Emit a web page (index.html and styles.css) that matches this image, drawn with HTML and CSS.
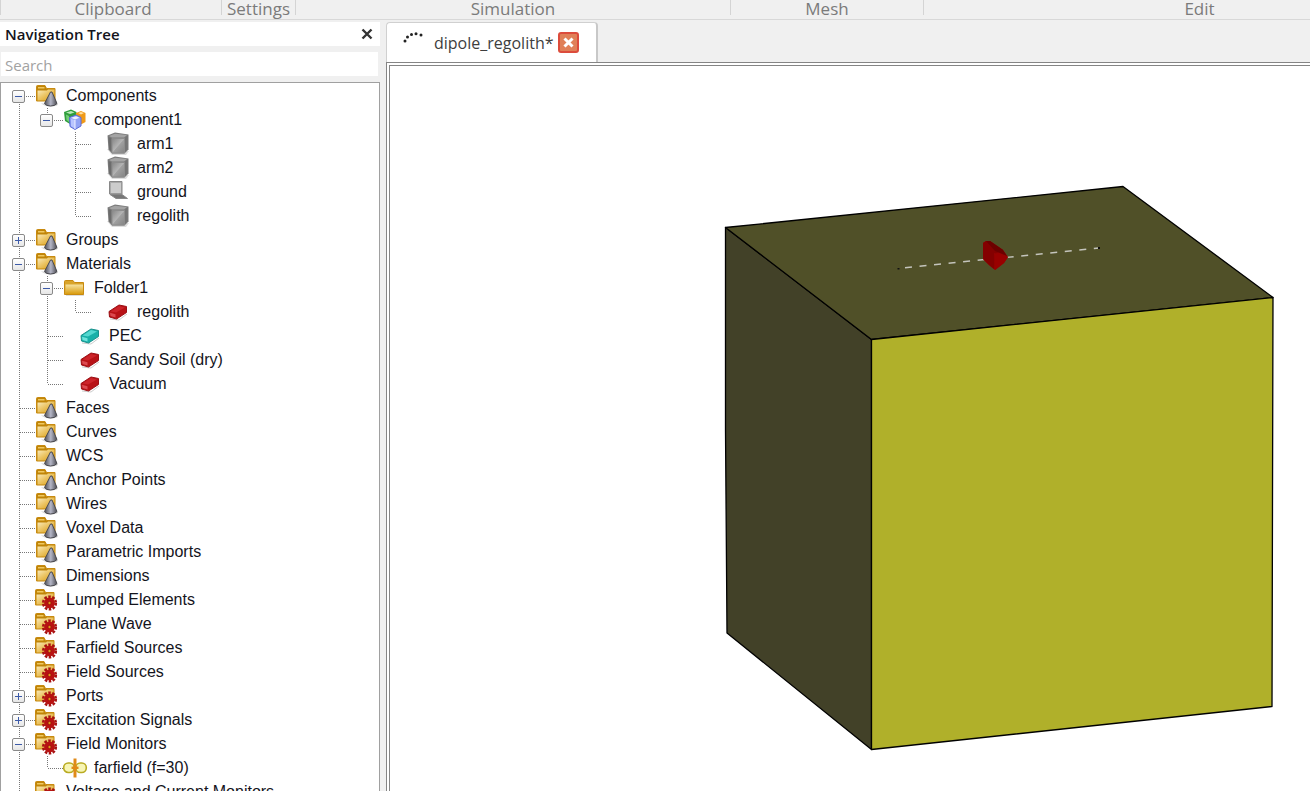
FILE: index.html
```html
<!DOCTYPE html>
<html lang="en">
<head>
<meta charset="utf-8">
<title>dipole_regolith</title>
<link rel="stylesheet" href="styles.css">
</head>
<body>
<svg class="sprite" width="0" height="0" aria-hidden="true">
  <defs>
    <linearGradient id="gold" x1="0" y1="0" x2="1" y2="1">
      <stop offset="0" stop-color="#fbedc0"/><stop offset=".45" stop-color="#ecc667"/><stop offset="1" stop-color="#d89a0c"/>
    </linearGradient>
    <linearGradient id="goldv" x1="0" y1="0" x2="0" y2="1">
      <stop offset="0" stop-color="#f6e2a0"/><stop offset="1" stop-color="#d99c0e"/>
    </linearGradient>
    <linearGradient id="steel" x1="0" y1="0" x2="1" y2="0">
      <stop offset="0" stop-color="#4e4e54"/><stop offset=".5" stop-color="#b4b6c6"/><stop offset="1" stop-color="#4a4a50"/>
    </linearGradient>
    <linearGradient id="gray" x1="0" y1="0" x2="1" y2="1">
      <stop offset="0" stop-color="#868686"/><stop offset=".48" stop-color="#b4b4b4"/><stop offset=".52" stop-color="#a0a0a0"/><stop offset="1" stop-color="#848484"/>
    </linearGradient>
    <g id="base">
      <path d="M.5 17V2.500Q.5 1.500 1.500 1.500H9l1.500 3h8.500V17z" fill="#c08508" stroke="#c88a10"/>
      <path d="M2 3h6.500v1.500H2z" fill="#f0c860"/>
      <path d="M1.500 6.500H11L12 5.500H18.500V16.500H1.500z" fill="url(#gold)"/>
    </g>
    <symbol id="cone" viewBox="0 0 24 24">
      <use href="#base"/>
      <path d="M5 19.500Q11 24 21 21.500L22 20z" fill="#999" opacity=".5"/>
      <path d="M14.500 8L8.500 19.500Q10 22 14.500 22T21 19.500L16 8z" fill="url(#steel)" stroke="#4a4a50"/>
    </symbol>
    <symbol id="gear" viewBox="0 0 24 24">
      <use href="#base" x="-1"/>
      <circle cx="13.500" cy="15" r="6.300" fill="none" stroke="#a81212" stroke-width="2.600" stroke-dasharray="2.500 1.458"/>
      <circle cx="13.500" cy="15" r="4" fill="#c40e0e" stroke="#b81212" stroke-width="2.800"/>
      <circle cx="13.500" cy="15" r="1.700" fill="#e39a18" stroke="#9a1010"/>
    </symbol>
    <symbol id="folder" viewBox="0 0 24 24">
      <path d="M2 19H20" stroke="#bbb"/>
      <path d="M.5 18.500V5.500Q.5 4.500 1.500 4.500H9l1.500 2H19.500V18.500z" fill="#d9a42a" stroke="#c88a10"/>
      <path d="M1.500 8.500H19V18H1.500z" fill="url(#goldv)"/>
    </symbol>
    <symbol id="component" viewBox="0 0 24 24">
      <path d="M0 4L7 1.500L12.500 4V13L6 16L1 13z" fill="#2f9e3c"/>
      <path d="M2 4.500L7 3L10.500 4.500L6 6z" fill="#b9e8b8"/><path d="M2 6.500L5 8V14L2.500 12z" fill="#74cc78"/>
      <path d="M12 5L17 3L21.500 5V14L16 17L12 14z" fill="#f09a18"/>
      <path d="M14 5L17 4L20 5L17 6.500z" fill="#ffe0a0"/>
      <path d="M5.500 9.500L12 7L17 9.500V18L11 21.500L6 18.500z" fill="#93a3f4" stroke="#5c6cd8"/>
      <path d="M7 9.800L12 8.300L15.500 9.800L11 11.500z" fill="#eef0ff"/><path d="M11 12V20.500L7 18V11z" fill="#b9c5ff"/><path d="M11 12V21" stroke="#eef0ff"/>
    </symbol>
    <symbol id="solid" viewBox="0 0 24 24">
      <path d="M0 17L5 23H19L22 19z" fill="#bbb" opacity=".5"/>
      <path d="M.5 3.500L8 .5L21.500 2.500V17.500L17.500 21.500H5L1.500 17.500z" fill="#7c7c7c"/>
      <path d="M2 4L8 1.700L20 3L17 5.500H5z" fill="#a4a4a4"/>
      <path d="M1.500 5L4.500 6.500V20L2 17z" fill="#6c6c6c"/>
      <path d="M5 6.500H17.500V21H5z" fill="url(#gray)" stroke="#8c8c8c"/>
      <path d="M18 6L20.500 3.500V17L18 20z" fill="#757575"/>
    </symbol>
    <symbol id="sheet" viewBox="0 0 24 24">
      <path d="M2.500 1.500H15V14H2.500z" fill="#aaa" stroke="#888"/>
      <path d="M4 3H14V13H4z" fill="#ccc"/>
      <path d="M3 14.500H15L20.500 18.500H9z" fill="#777" stroke="#888"/>
    </symbol>
    <symbol id="red" viewBox="0 0 24 24">
      <path d="M3 19L12 20L20 14" stroke="#aaa" fill="none" opacity=".6"/>
      <path d="M2 11.500L12 5L19.500 6.500V12.500L9.500 19L2.500 17z" fill="#b81216" stroke="#9c1015"/>
      <path d="M3.500 11.500L12 6L18 7.500L9 12.500z" fill="#cc242a"/><path d="M3 12.800L8.500 14.200V17.500L3.500 16z" fill="#dc4a50"/>
    </symbol>
    <symbol id="teal" viewBox="0 0 24 24">
      <path d="M3 19L12 20L20 14" stroke="#aaa" fill="none" opacity=".6"/>
      <path d="M2 11.500L12 5L19.500 6.500V12.500L9.500 19L2.500 17z" fill="#18b0a8" stroke="#1a918c"/>
      <path d="M3.500 11.500L12 6L18 7.500L9 12.500z" fill="#54d8d0"/><path d="M3 12.800L8.500 14.200V17.500L3.500 16z" fill="#70e4dc"/>
    </symbol>
    <symbol id="farfield" viewBox="0 0 24 24">
      <rect x="-.3" y="7" width="10.500" height="9.500" rx="4.500" fill="#f7f5b4" stroke="#b9ab22" stroke-width="1.600"/>
      <rect x="11.800" y="7" width="10.500" height="9.500" rx="4.500" fill="#f7f5b4" stroke="#b9ab22" stroke-width="1.600"/>
      <path d="M11 2.500V21.500" stroke="#e08a18" stroke-width="3"/><path d="M7.500 11.800H14.500" stroke="#e08a18" stroke-width="2.400"/>
    </symbol>
  </defs>
</svg>

<header class="ribbon">
  <div class="group clipboard">Clipboard</div>
  <div class="group settings">Settings</div>
  <div class="group simulation">Simulation</div>
  <div class="group mesh">Mesh</div>
  <div class="group edit">Edit</div>
</header>

<div class="workspace">
  <aside class="nav">
    <div class="nav-title">
      <h1>Navigation Tree</h1>
      <button class="nav-close" aria-label="Close navigation tree"><svg width="12" height="12" viewBox="0 0 12 12"><path d="M1.500 1.500L10.500 10.500M10.500 1.500L1.500 10.500" stroke="#333" stroke-width="2.400"/></svg></button>
    </div>
    <input class="search" type="text" placeholder="Search" aria-label="Search">
    <ul class="tree">
      <li>
        <div class="row"><button class="toggle" aria-label="Collapse"></button><svg class="icon"><use href="#cone"/></svg>Components</div>
        <ul>
          <li>
            <div class="row"><button class="toggle" aria-label="Collapse"></button><svg class="icon"><use href="#component"/></svg>component1</div>
            <ul>
              <li><div class="row leaf"><svg class="icon"><use href="#solid"/></svg>arm1</div></li>
              <li><div class="row leaf"><svg class="icon"><use href="#solid"/></svg>arm2</div></li>
              <li><div class="row leaf"><svg class="icon"><use href="#sheet"/></svg>ground</div></li>
              <li><div class="row leaf"><svg class="icon"><use href="#solid"/></svg>regolith</div></li>
            </ul>
          </li>
        </ul>
      </li>
      <li><div class="row"><button class="toggle closed" aria-label="Expand"></button><svg class="icon"><use href="#cone"/></svg>Groups</div></li>
      <li>
        <div class="row"><button class="toggle" aria-label="Collapse"></button><svg class="icon"><use href="#cone"/></svg>Materials</div>
        <ul>
          <li>
            <div class="row"><button class="toggle" aria-label="Collapse"></button><svg class="icon"><use href="#folder"/></svg>Folder1</div>
            <ul>
              <li><div class="row leaf"><svg class="icon"><use href="#red"/></svg>regolith</div></li>
            </ul>
          </li>
          <li><div class="row leaf"><svg class="icon"><use href="#teal"/></svg>PEC</div></li>
          <li><div class="row leaf"><svg class="icon"><use href="#red"/></svg>Sandy Soil (dry)</div></li>
          <li><div class="row leaf"><svg class="icon"><use href="#red"/></svg>Vacuum</div></li>
        </ul>
      </li>
      <li><div class="row plain"><svg class="icon"><use href="#cone"/></svg>Faces</div></li>
      <li><div class="row plain"><svg class="icon"><use href="#cone"/></svg>Curves</div></li>
      <li><div class="row plain"><svg class="icon"><use href="#cone"/></svg>WCS</div></li>
      <li><div class="row plain"><svg class="icon"><use href="#cone"/></svg>Anchor Points</div></li>
      <li><div class="row plain"><svg class="icon"><use href="#cone"/></svg>Wires</div></li>
      <li><div class="row plain"><svg class="icon"><use href="#cone"/></svg>Voxel Data</div></li>
      <li><div class="row plain"><svg class="icon"><use href="#cone"/></svg>Parametric Imports</div></li>
      <li><div class="row plain"><svg class="icon"><use href="#cone"/></svg>Dimensions</div></li>
      <li><div class="row plain"><svg class="icon"><use href="#gear"/></svg>Lumped Elements</div></li>
      <li><div class="row plain"><svg class="icon"><use href="#gear"/></svg>Plane Wave</div></li>
      <li><div class="row plain"><svg class="icon"><use href="#gear"/></svg>Farfield Sources</div></li>
      <li><div class="row plain"><svg class="icon"><use href="#gear"/></svg>Field Sources</div></li>
      <li><div class="row"><button class="toggle closed" aria-label="Expand"></button><svg class="icon"><use href="#gear"/></svg>Ports</div></li>
      <li><div class="row"><button class="toggle closed" aria-label="Expand"></button><svg class="icon"><use href="#gear"/></svg>Excitation Signals</div></li>
      <li>
        <div class="row"><button class="toggle" aria-label="Collapse"></button><svg class="icon"><use href="#gear"/></svg>Field Monitors</div>
        <ul>
          <li><div class="row plain"><svg class="icon"><use href="#farfield"/></svg>farfield (f=30)</div></li>
        </ul>
      </li>
      <li><div class="row plain"><svg class="icon"><use href="#gear"/></svg>Voltage and Current Monitors</div></li>
    </ul>
  </aside>

  <main class="document">
    <div class="tabs">
      <div class="tab">
        <svg class="spinner" width="22" height="22" viewBox="0 0 22 22" fill="#222"><circle cx="3" cy="9" r="1.500"/><circle cx="5.500" cy="5" r="1.500"/><circle cx="9.500" cy="2.500" r="1.500"/><circle cx="14" cy="1.700" r="1.500"/><circle cx="19" cy="3" r="1.500"/></svg>
        <span class="tab-name">dipole_regolith*</span>
        <button class="tab-close" aria-label="Close tab"><svg width="11" height="11" viewBox="0 0 11 11"><path d="M1.500 1.500L9.500 9.500M9.500 1.500L1.500 9.500" stroke="#fff" stroke-width="3"/></svg></button>
      </div>
    </div>
    <div class="frame">
      <svg class="model" viewBox="390 66 920 724" preserveAspectRatio="xMinYMin meet" role="img" aria-label="Regolith block with dipole antenna">
        <g stroke="#000" stroke-width="1.300" stroke-linejoin="round">
          <path d="M725.500 227.500L871.500 339.500V749.500L727 633L725.500 430z" fill="#424128"/>
          <path d="M725.500 227.500L1123 186.500L1273 297.500L871.500 339.500z" fill="#505028"/>
          <path d="M871.500 339.500L1273 297.500L1272 706.500L871.500 749.500z" fill="#b0b02a"/>
        </g>
        <path d="M905 267.700L1099 248" stroke="#c4c4bc" stroke-width="1.500" stroke-dasharray="7 7.600"/>
        <path d="M897.500 268h2v1.500h-2zM1098 247h2v2h-2z" fill="#111"/>
        <path d="M983 243L986 241H990L1003 250L1008 257L1004 263L995 270L989 265L983 259z" fill="#980000"/>
        <path d="M983 243L986 241H990L1003 250L995 254L994 269L989 265L983 259z" fill="#840000"/>
        <path d="M986 241H990L1003 250L1007 256L995 251z" fill="#6c0000"/>
        <path d="M994 253L1008 257L1004 263L995 270z" fill="#990000"/>
      </svg>
    </div>
  </main>
</div>
</body>
</html>
```
FILE: styles.css
```css
* { box-sizing: border-box; }

body {
  margin: 0;
  height: 100vh;
  display: flex;
  flex-direction: column;
  overflow: hidden;
  background: #f0f0f0;
  color: #14141c;
  font: 15px/20px "Open Sans", "Noto Sans", sans-serif;
}

button { padding: 0; border: 0; background: none; }

.sprite { position: absolute; }

.ribbon {
  display: flex;
  flex: none;
  height: 20px;
  border-bottom: 1px solid #d8d8d8;
  color: #7b7b7b;
  font-size: 17px;
}

.group {
  flex: none;
  height: 15px;
  border-right: 1px solid #d4d4d4;
  line-height: 17px;
  text-align: center;
}

.clipboard { width: 222px; padding-left: 4px; border-left: 1px solid #d4d4d4; }
.settings { width: 74px; }
.simulation { width: 435px; }
.mesh { width: 193px; }
.edit { flex: 1; min-width: 0; padding-left: 165px; border-right: 0; }

.workspace {
  flex: 1;
  min-height: 0;
  display: flex;
  gap: 6px;
  padding-top: 2px;
}

.nav {
  flex: none;
  width: 380px;
  display: flex;
  flex-direction: column;
}

.nav-title {
  display: flex;
  align-items: center;
  justify-content: space-between;
  flex: none;
  height: 24px;
  padding: 0 7px 0 5px;
  background: #fff;
}

.nav-title h1 {
  margin: 0;
  font-size: 15px;
  font-weight: 600;
}

.nav-close { display: flex; }

.search {
  flex: none;
  height: 24px;
  margin: 6px 2px 6px 1px;
  padding: 2px 4px 0;
  border: 0;
  background: #fff;
  font: inherit;
}

.search::placeholder { color: #a2a2a2; opacity: 1; }

.tree {
  flex: 1;
  min-height: 0;
  overflow: hidden;
  border: 1px solid #a0a0a0;
  border-bottom: 0;
  padding-top: 1px;
  background: #fff;
  font: 16px/24px "Liberation Sans", Arial, sans-serif;
}

.tree, .tree ul { margin: 0; list-style: none; }
.tree { padding-left: 0; }
.tree ul { padding-left: 28px; }

.tree li {
  background: repeating-linear-gradient(#777 0 1px, #fff 1px 2px) 18px 0 / 1px 100% no-repeat;
}

.tree > li:first-child { background-position: 18px 12px; }
.tree ul > li:last-child { background-size: 1px 12px; }

.row {
  display: flex;
  align-items: center;
  height: 24px;
  padding-left: 11px;
  white-space: nowrap;
  background: repeating-linear-gradient(to right, #777 0 1px, #fff 1px 2px) 19px 12px / 15px 1px no-repeat;
}

.plain { padding-left: 35px; }
.leaf { padding-left: 50px; }

.icon {
  flex: none;
  width: 24px;
  height: 24px;
  margin-right: 6px;
}

.icon, symbol { overflow: visible; }

.toggle {
  flex: none;
  width: 13px;
  height: 13px;
  margin-right: 11px;
  border: 1px solid #898989;
  border-radius: 2px;
  background:
    linear-gradient(#3c5aa8, #3c5aa8) center / 7px 1px no-repeat,
    linear-gradient(#fff, #e6e6e6);
}

.closed {
  background:
    linear-gradient(#3c5aa8, #3c5aa8) center / 7px 1px no-repeat,
    linear-gradient(#3c5aa8, #3c5aa8) center / 1px 7px no-repeat,
    linear-gradient(#fff, #e6e6e6);
}

.document {
  flex: 1;
  min-width: 0;
  display: flex;
  flex-direction: column;
}

.tabs { display: flex; flex: none; }

.tab {
  display: flex;
  align-items: center;
  height: 40px;
  padding: 0 17px 0 15px;
  border: 1px solid #d0d0d0;
  border-right: 2px solid #c8c8c8;
  border-bottom: 0;
  border-radius: 4px 4px 0 0;
  background: #fff;
  color: #3e3e3e;
  font-size: 16px;
}

.spinner { margin-right: 10px; }
.tab-name { margin-right: 4px; }

.tab-close {
  display: flex;
  align-items: center;
  justify-content: center;
  width: 21px;
  height: 21px;
  border: 2px solid #dc4c3c;
  border-radius: 3px;
  background: #e08058;
}

.frame {
  flex: 1;
  min-height: 0;
  display: flex;
  border: 4px double #858585;
  border-right: 0;
  border-bottom: 0;
  background: #fff;
}

.model { flex: 1; min-width: 0; }
```
